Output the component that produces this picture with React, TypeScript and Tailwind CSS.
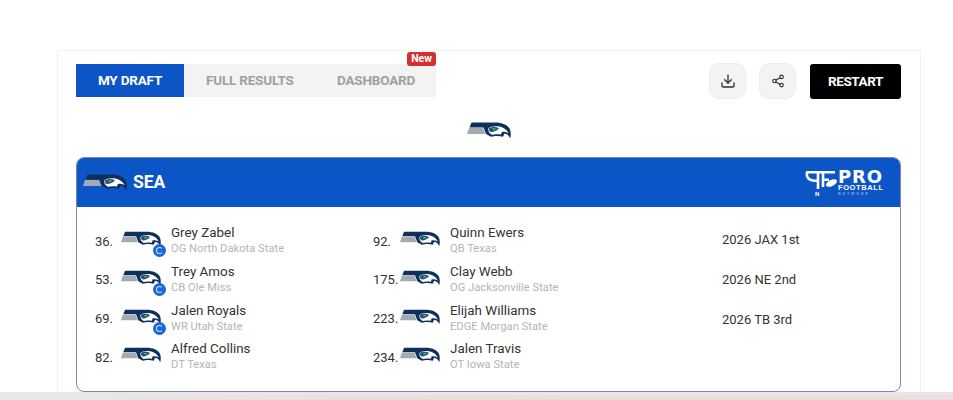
import React from "react";
import { Download, Share2 } from "lucide-react";

const picks = [
    { no: "36.", name: "Grey Zabel", info: "OG North Dakota State", badge: true },
    { no: "53.", name: "Trey Amos", info: "CB Ole Miss", badge: true },
    { no: "69.", name: "Jalen Royals", info: "WR Utah State", badge: true },
    { no: "82.", name: "Alfred Collins", info: "DT Texas", badge: false },
];

const picks2 = [
    { no: "92.", name: "Quinn Ewers", info: "QB Texas", badge: false },
    { no: "175.", name: "Clay Webb", info: "OG Jacksonville State", badge: false },
    { no: "223.", name: "Elijah Williams", info: "EDGE Morgan State", badge: false },
    { no: "234.", name: "Jalen Travis", info: "OT Iowa State", badge: false },
];

const futures = ["2026 JAX 1st", "2026 NE 2nd", "2026 TB 3rd"];

function Hawk({ className }: { className: string }) {
    return (
        <svg className={className} viewBox="0 0 44 17" fill="none">
            <path d="M4.5 0.6 L26 0.6 C34 0 40 2.5 42.6 6.5 C44 9.5 44 13 43.2 16.5 C42 13.5 40 12 37.5 11.6 L36 14.8 C32 13.6 27 14 24 14.8 L19 12 L16.5 5.4 L2.5 5.4 Z" fill="#0f2f5c" />
            <path d="M2 6 L16 6 L18.4 12 L0 12 Z" fill="#a3abb0" />
            <path d="M21 6.5 C24 3.8 31 3.4 35.5 5.4 C38.5 6.8 40.5 8.8 41.6 11.2 C39.5 10 37 9.6 34.8 10 L34 12.6 C30 12 27.5 12.2 24.8 12.8 L22 10.5 Z" fill="#ffffff" />
            <path d="M21.5 6.6 C24.5 4.6 29 4.6 32 6.2 C30 9 26 10.4 23 10 Z" fill="#24527a" />
            <path d="M25 6.2 L30 6.4 L26.5 8.2 Z" fill="#5cb947" />
        </svg>
    );
}

function Pick({ no, name, info, badge, numWidth }: { no: string; name: string; info: string; badge: boolean; numWidth: string }) {
    return (
        <div className="flex h-[38.7px] items-center">
            <div className={`${numWidth} shrink-0 text-[13px] whitespace-nowrap text-[#333]`}>{no}</div>
            <div className="relative mr-[10px] mb-[4px] shrink-0">
                <Hawk className="h-[16px] w-[40px]" />
                {badge && (
                    <div className="absolute top-[13px] left-[32px] flex h-[13px] w-[13px] items-center justify-center rounded-full bg-[#1b68d9]">
                        <div className="h-[7px] w-[7px] rounded-full border border-[#cfe0f7] border-r-transparent" />
                    </div>
                )}
            </div>
            <div className="flex flex-col">
                <div className="text-[13.4px] leading-[15px] font-normal text-[#333]">{name}</div>
                <div className="mt-[1px] text-[11.2px] leading-[16px] text-[#b5b5b5]">{info}</div>
            </div>
        </div>
    );
}

export default function App() {
    return (
        <div className="flex h-[400px] w-[953px] flex-col overflow-hidden bg-white font-['Roboto',sans-serif]">
            <div className="h-[392px] shrink-0 overflow-hidden pt-[50px] pl-[57px]">
                <div className="h-[360px] w-[864px] border border-[#f2f2f2] pt-[12px] pr-[19px] pl-[18px]">
                    <div className="flex items-center justify-between">
                        <div className="relative mb-[1px] flex h-[33px] w-[360px] items-center bg-[#f3f3f3] text-[13.5px] font-bold tracking-[-0.2px] text-[#a0a0a0]">
                            <div className="flex h-full w-[108px] items-center justify-center bg-[#0b55c7] text-white">MY DRAFT</div>
                            <div className="ml-[22px] w-[131px]">FULL RESULTS</div>
                            <div>DASHBOARD</div>
                            <div className="absolute -top-[12px] right-0 rounded-[3px] bg-[#d62f2f] px-[4px] text-[10.5px] leading-[14px] font-bold tracking-normal text-white">New</div>
                        </div>
                        <div className="flex items-center">
                            <button className="flex h-[36px] w-[37px] items-center justify-center rounded-[10px] border border-[#ededed] bg-[#f3f3f3] text-[#333]">
                                <Download size={16} strokeWidth={2} />
                            </button>
                            <button className="ml-[13px] flex h-[36px] w-[37px] items-center justify-center rounded-[10px] border border-[#ededed] bg-[#f3f3f3] text-[#333]">
                                <Share2 size={14} strokeWidth={2} />
                            </button>
                            <button className="ml-[14px] h-[35px] w-[91px] rounded-[3px] bg-black text-[13.5px] font-bold tracking-[-0.4px] text-white">RESTART</button>
                        </div>
                    </div>

                    <div className="mt-[23px] flex justify-center">
                        <Hawk className="h-[17px] w-[44px]" />
                    </div>

                    <div className="mt-[18px] h-[235px] w-[825px] overflow-hidden rounded-[8px] border border-[#7f83ad]">
                        <div className="flex h-[49px] items-center justify-between bg-[#0b55c7] pr-[17px] pl-[6px]">
                            <div className="flex items-center">
                                <Hawk className="h-[17px] w-[44px]" />
                                <div className="ml-[6px] text-[17.5px] font-bold text-white">SEA</div>
                            </div>
                            <div className="flex items-center text-white">
                                <svg className="h-[28px] w-[33px]" viewBox="0 0 33 28" fill="none" stroke="currentColor" strokeWidth="2.6">
                                    <path d="M1 3.2 H30" />
                                    <path d="M2 3.5 C1 9 4 11.8 12 11.8" />
                                    <path d="M13 3 V20 M18 3 V18 M18 10.8 H24" />
                                    <ellipse cx="26.5" cy="14" rx="6" ry="3" transform="rotate(-28 26.5 14)" fill="currentColor" stroke="none" />
                                    <text x="10" y="27" fontSize="6" fontWeight="700" fill="currentColor" stroke="none">N</text>
                                </svg>
                                <div className="flex w-[45px] flex-col">
                                    <div className="font-['DejaVu_Sans',sans-serif] text-[18px] leading-[15px] font-bold tracking-[0.8px]">PRO</div>
                                    <div className="font-['Liberation_Sans',sans-serif] text-[7.5px] leading-[8px] font-bold tracking-[0.6px]">FOOTBALL</div>
                                    <div className="text-[3.5px] leading-[4px] tracking-[2.2px] opacity-70">NETWORK</div>
                                </div>
                            </div>
                        </div>
                        <div className="flex pt-[15px] pl-[18px]">
                            <div className="w-[278px] shrink-0">
                                {picks.map((p) => (
                                    <Pick key={p.no} {...p} numWidth="w-[26px]" />
                                ))}
                            </div>
                            <div className="w-[349px] shrink-0">
                                {picks2.map((p) => (
                                    <Pick key={p.no} {...p} numWidth="w-[27px]" />
                                ))}
                            </div>
                            <div className="-mt-[2px]">
                                {futures.map((f) => (
                                    <div key={f} className="flex h-[40px] items-center text-[13px] text-[#333]">{f}</div>
                                ))}
                            </div>
                        </div>
                    </div>
                </div>
            </div>
            <div className="h-[3px] shrink-0 bg-[#e8e8e8]" />
            <div className="flex-1 bg-gradient-to-r from-[#e8e8e8] via-[#ecdcda] to-[#efdfdc]" />
        </div>
    );
}
